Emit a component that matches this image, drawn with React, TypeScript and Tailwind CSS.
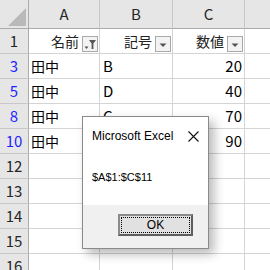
import React from 'react';

const cjk = { fontFamily: '"Noto Sans CJK JP", "Noto Sans", sans-serif' };
const ui = { fontFamily: '"Liberation Sans", Arial, sans-serif' };

type Row = { n: string; blue?: boolean; a?: string; b?: string; c?: string; head?: boolean };

const rows: Row[] = [
  { n: '1', head: true },
  { n: '3', blue: true, a: '田中', b: 'B', c: '20' },
  { n: '5', blue: true, a: '田中', b: 'D', c: '40' },
  { n: '8', blue: true, a: '田中', b: 'C', c: '70' },
  { n: '10', blue: true, a: '田中', b: 'A', c: '90' },
  { n: '12' },
  { n: '13' },
  { n: '14' },
  { n: '15' },
  { n: '16' },
];

const FilterBox = ({ active }: { active?: boolean }) => (
  <span className="ml-[3px] flex h-[16px] w-[16px] shrink-0 items-center justify-center border border-[#a9a9a9] bg-[#f3f3f3]">
    {active ? (
      <svg width="14" height="14" viewBox="0 0 14 14">
        <path d="M1.5 9.5h4l-2 2.5z" fill="#555" />
        <path d="M6 3h7l-2.6 3.6V12H8.6V6.6z" fill="#555" />
      </svg>
    ) : (
      <svg width="14" height="14" viewBox="0 0 14 14">
        <path d="M3.5 6.5h7l-3.5 3.5z" fill="#555" />
      </svg>
    )}
  </span>
);

const HeadCell = ({ label, active }: { label: string; active?: boolean }) => (
  <div className="flex h-[25px] items-end justify-end border-r border-b border-[#d4d4d4] pr-[1px] pb-[1px]">
    <span className="mb-[1px] text-[14px] leading-[20px] text-[#222]" style={cjk}>{label}</span>
    <FilterBox active={active} />
  </div>
);

export default function App() {
  return (
    <div className="relative h-[270px] w-[270px] overflow-hidden bg-white">
      <div className="grid grid-cols-[29px_71px_73px_72px_80px]" style={cjk}>
        {/* column headers */}
        <div className="relative h-[29px] border-r border-b border-[#ababab] bg-[#e6e6e6]">
          <svg className="absolute top-[8px] left-[8px]" width="18" height="18" viewBox="0 0 18 18">
            <path d="M18 0V18H0z" fill="#b9b9b9" />
          </svg>
        </div>
        {['A', 'B', 'C', ''].map((l, i) => (
          <div
            key={i}
            className="flex h-[29px] items-center justify-center border-r border-b border-r-[#c8c8c8] border-b-[#ababab] bg-[#e6e6e6] text-[15px] text-[#262626]"
          >
            {l}
          </div>
        ))}

        {rows.map((r) => (
          <React.Fragment key={r.n}>
            <div
              className={`flex h-[25px] items-center justify-center border-r border-b border-r-[#ababab] border-b-[#c8c8c8] bg-[#e6e6e6] text-[15px] ${
                r.blue ? 'text-[#1f1fff]' : 'text-[#262626]'
              }`}
            >
              {r.n}
            </div>
            {r.head ? (
              <>
                <HeadCell label="名前" active />
                <HeadCell label="記号" />
                <HeadCell label="数値" />
              </>
            ) : (
              <>
                <div className="flex h-[25px] items-center border-r border-b border-[#d4d4d4] pl-[2px] text-[14px] text-black">{r.a}</div>
                <div className="flex h-[25px] items-center border-r border-b border-[#d4d4d4] pl-[3px] text-[15px] text-black">{r.b}</div>
                <div className="flex h-[25px] items-center justify-end border-r border-b border-[#d4d4d4] pr-[2px] text-[15px] text-black">{r.c}</div>
              </>
            )}
            <div className="h-[25px] border-r border-b border-[#d4d4d4]" />
          </React.Fragment>
        ))}
      </div>

      {/* message box */}
      <div
        className="absolute top-[116px] left-[82px] flex h-[133px] w-[127px] flex-col border border-[#8a8a8a] bg-white shadow-[5px_5px_10px_rgba(0,0,0,0.28)]"
        style={ui}
      >
        <div className="flex h-[28px] items-end justify-between pr-[9px] pl-[9px]">
          <span className="pb-[1px] text-[12px] leading-[16px] text-black">Microsoft Excel</span>
          <svg className="mb-[3px]" width="11" height="11" viewBox="0 0 11 11">
            <path d="M0.5 0.5L10.5 10.5M10.5 0.5L0.5 10.5" stroke="#111" strokeWidth="1.1" />
          </svg>
        </div>
        <div className="flex flex-1 items-center pl-[9px] pt-[3px]">
          <span className="text-[11px] leading-[14px] text-black">$A$1:$C$11</span>
        </div>
        <div className="flex h-[43px] items-start justify-end bg-[#f0f0f0] pt-[9px] pr-[15px]">
          <button className="flex h-[22px] w-[75px] items-center justify-center border-2 border-t-[#8a8a8a] border-l-[#8a8a8a] border-r-[#5e5e5e] border-b-[#5e5e5e] bg-[#e1e1e1] p-[1px]">
            <span className="flex h-full w-full items-center justify-center border border-dotted border-black text-[12px] leading-none text-black">
              OK
            </span>
          </button>
        </div>
      </div>
    </div>
  );
}
